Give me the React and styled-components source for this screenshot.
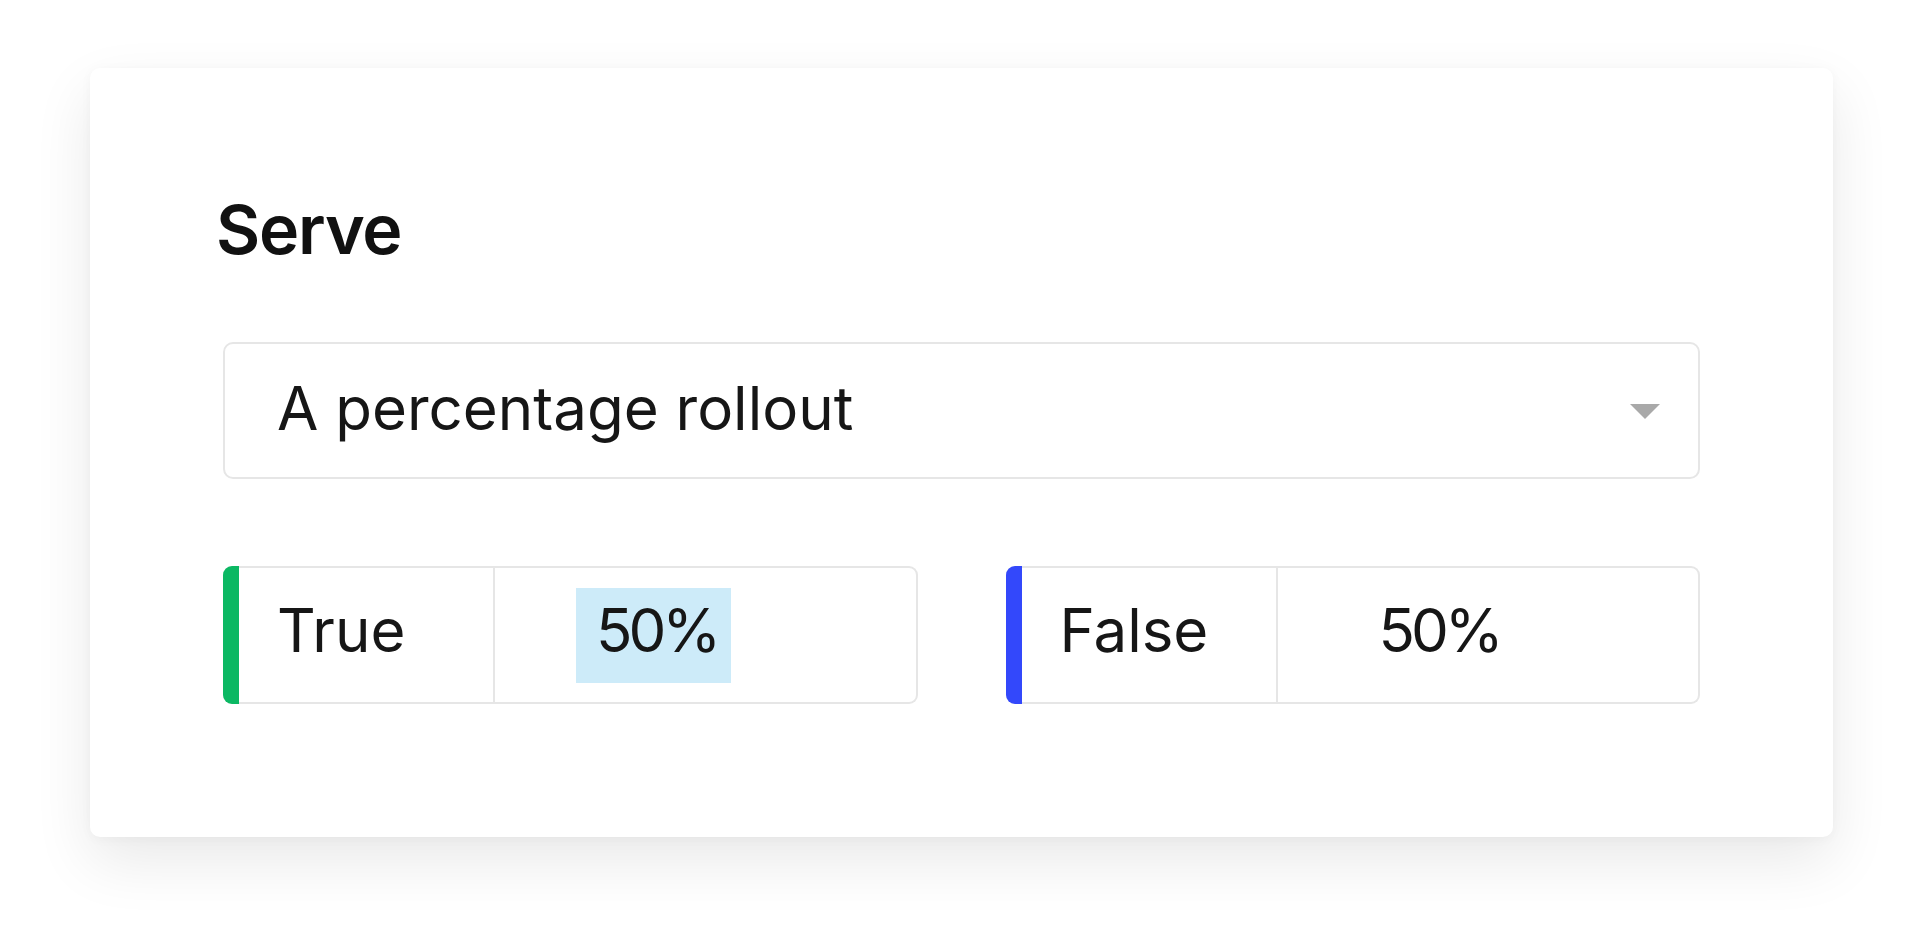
import React from "react";
import styled, { createGlobalStyle } from "styled-components";

const GlobalStyle = createGlobalStyle`
  html, body {
    margin: 0;
    padding: 0;
    background: #ffffff;
  }
  body {
    font-family: Inter, "Noto Sans", "Liberation Sans", sans-serif;
    color: #161616;
  }
`;

const Page = styled.div`
  width: 1920px;
  height: 945px;
  box-sizing: border-box;
  padding: 68px 0 0 90px;
  background: #ffffff;
  overflow: hidden;
`;

const Card = styled.section`
  width: 1743px;
  box-sizing: border-box;
  padding: 120px 133px 133px;
  background: #ffffff;
  border-radius: 10px;
  box-shadow: 0 24px 60px rgba(0, 0, 0, 0.09), 0 2px 12px rgba(0, 0, 0, 0.035);
  display: flex;
  flex-direction: column;
`;

const Title = styled.h2`
  margin: 0 0 72px -7px;
  font-size: 68px;
  line-height: 82px;
  font-weight: 560;
  color: #111111;
  letter-spacing: -1.2px;
`;

const Select = styled.div`
  height: 137px;
  box-sizing: border-box;
  border: 2px solid #e6e6e6;
  border-radius: 10px;
  display: flex;
  align-items: center;
  justify-content: space-between;
  padding: 0 38px 0 52px;
  margin-bottom: 87px;
`;

const SelectText = styled.span`
  font-size: 60px;
  line-height: 72px;
  font-weight: 400;
  color: #161616;
  margin-top: -6px;
`;

const Caret = styled.span`
  width: 0;
  height: 0;
  border-left: 15px solid transparent;
  border-right: 15px solid transparent;
  border-top: 15px solid #a9a9a9;
  margin-top: 2px;
`;

const Split = styled.div`
  display: grid;
  grid-template-columns: 1fr 1fr;
  column-gap: 88px;
`;

const Variant = styled.div`
  height: 138px;
  box-sizing: border-box;
  display: grid;
  grid-template-columns: 16px 256px 1fr;
  border: 2px solid #e6e6e6;
  border-left: none;
  border-radius: 9px;
`;

const Bar = styled.div`
  margin: -2px 0;
  background: ${(p) => p.color};
  border-radius: 9px 0 0 9px;
`;

const Label = styled.div`
  display: flex;
  align-items: center;
  padding: 0 0 10px 38px;
  border-right: 2px solid #e6e6e6;
  font-size: 60px;
  color: #161616;
`;

const Value = styled.div`
  display: flex;
  align-items: center;
  padding-left: 81px;
`;

const Percent = styled.span`
  display: inline-flex;
  align-items: center;
  height: 95px;
  box-sizing: border-box;
  padding: 0 14px 10px 20px;
  font-size: 60px;
  letter-spacing: -4px;
  color: #161616;
  background: ${(p) => (p.selected ? "#cdebf9" : "transparent")};
`;

const variants = [
  { label: "True", color: "#0bb863", value: "50%", selected: true },
  { label: "False", color: "#3348fb", value: "50%", selected: false },
];

export default function App() {
  return (
    <>
      <GlobalStyle />
      <Page>
        <Card>
          <Title>Serve</Title>
          <Select>
            <SelectText>A percentage rollout</SelectText>
            <Caret />
          </Select>
          <Split>
            {variants.map((v) => (
              <Variant key={v.label}>
                <Bar color={v.color} />
                <Label>{v.label}</Label>
                <Value>
                  <Percent selected={v.selected}>{v.value}</Percent>
                </Value>
              </Variant>
            ))}
          </Split>
        </Card>
      </Page>
    </>
  );
}
